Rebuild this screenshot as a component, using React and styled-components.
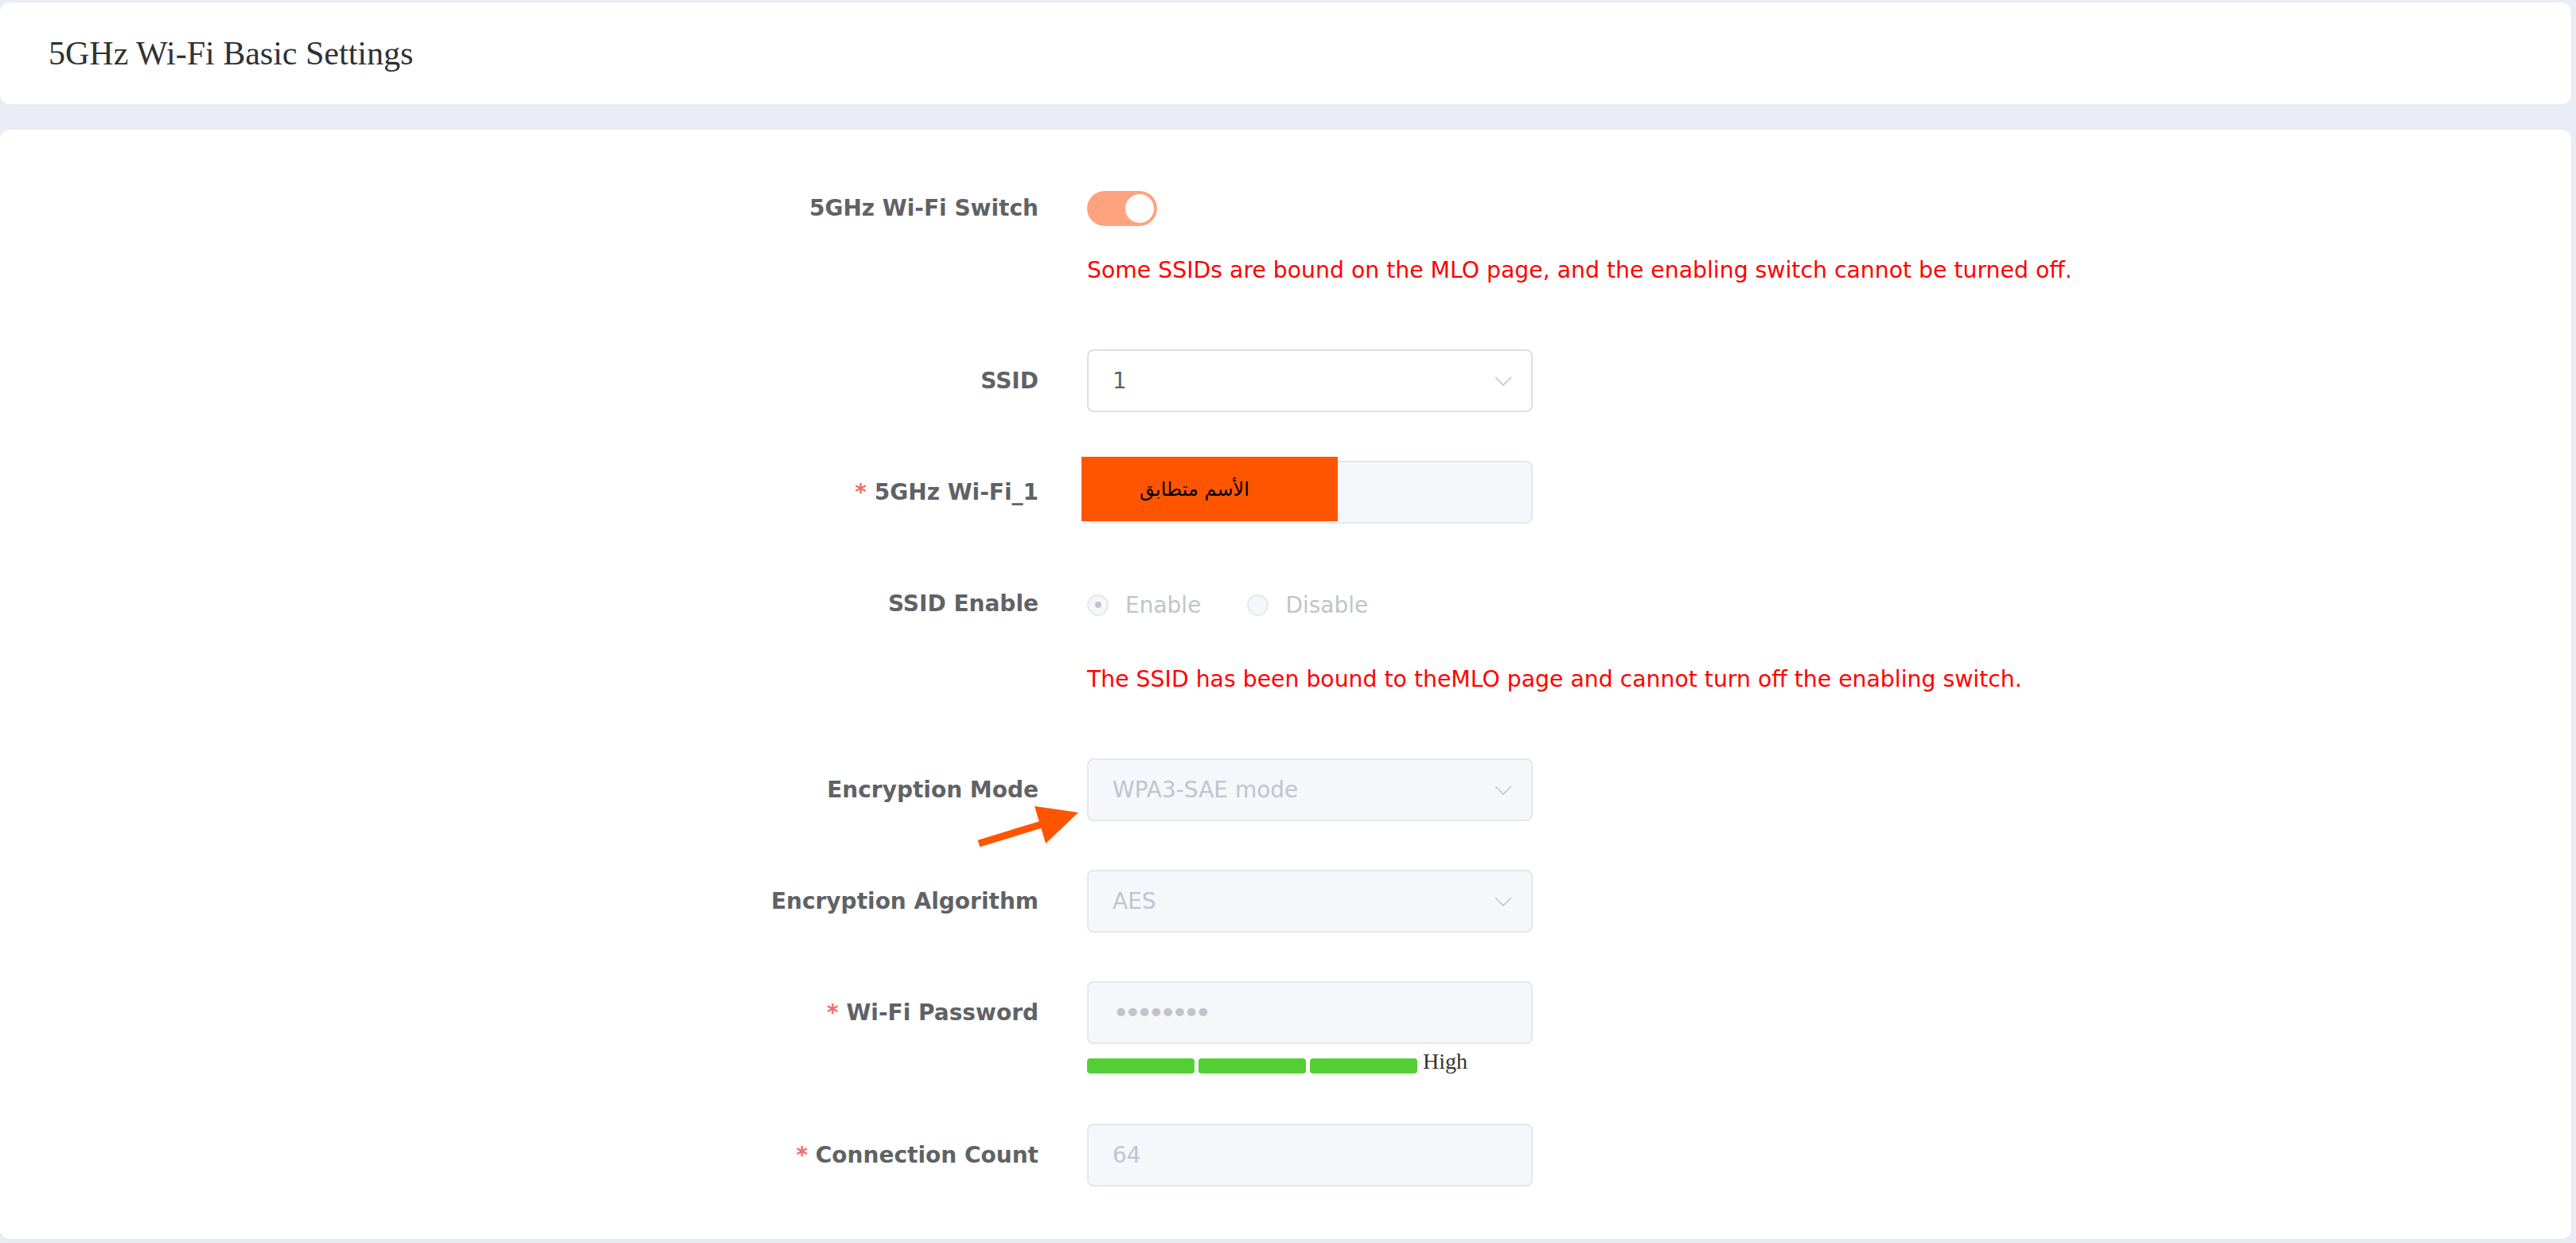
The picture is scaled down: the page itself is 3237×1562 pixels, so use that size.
import styled, { createGlobalStyle } from "styled-components";

const GlobalStyle = createGlobalStyle`
  html, body {
    margin: 0;
    padding: 0;
    background: #e9ecf4;
  }
  * {
    box-sizing: border-box;
  }
`;

function Chevron() {
  return (
    <ChevronIcon viewBox="0 0 22 12" width="22" height="12">
      <polyline points="1,1 11,11 21,1" fill="none" stroke="#c0c4cc" strokeWidth="1.6" />
    </ChevronIcon>
  );
}

function Arrow() {
  return (
    <ArrowMark viewBox="0 0 130 56" width="130" height="56">
      <polygon
        points="0.7,44.7 77.7,21.2 72,2 127,10 86,49 80.3,29.8 3.3,53.3"
        fill="#ff5500"
      />
    </ArrowMark>
  );
}

function Select({ value, disabled }) {
  return (
    <Field disabled={disabled}>
      <FieldText disabled={disabled}>{value}</FieldText>
      <Chevron />
    </Field>
  );
}

function App() {
  return (
    <>
      <GlobalStyle />
      <Page>
        <HeaderCard>
          <Title>5GHz Wi-Fi Basic Settings</Title>
        </HeaderCard>

        <FormCard>
          <FormItem>
            <Label>5GHz Wi-Fi Switch</Label>
            <Content>
              <ControlLine>
                <Switch>
                  <Knob />
                </Switch>
              </ControlLine>
              <Message top={19} bottom={18}>
                Some SSIDs are bound on the MLO page, and the enabling switch cannot be turned off.
              </Message>
            </Content>
          </FormItem>

          <FormItem>
            <Label>SSID</Label>
            <Content>
              <Select value="1" />
            </Content>
          </FormItem>

          <FormItem>
            <Label>
              <Required>*</Required> 5GHz Wi-Fi_1
            </Label>
            <Content>
              <Field disabled>
                <NameBadge>الأسم متطابق</NameBadge>
              </Field>
            </Content>
          </FormItem>

          <FormItem>
            <Label>SSID Enable</Label>
            <Content>
              <ControlLine shift={3}>
                <RadioOption>
                  <RadioCircle checked />
                  Enable
                </RadioOption>
                <RadioOption>
                  <RadioCircle />
                  Disable
                </RadioOption>
              </ControlLine>
              <Message top={36} bottom={18}>
                The SSID has been bound to theMLO page and cannot turn off the enabling switch.
              </Message>
            </Content>
          </FormItem>

          <FormItem>
            <Label>Encryption Mode</Label>
            <Content>
              <Select value="WPA3-SAE mode" disabled />
              <Arrow />
            </Content>
          </FormItem>

          <FormItem>
            <Label>Encryption Algorithm</Label>
            <Content>
              <Select value="AES" disabled />
            </Content>
          </FormItem>

          <FormItem>
            <Label>
              <Required>*</Required> Wi-Fi Password
            </Label>
            <Content>
              <Field disabled>
                <Dots>••••••••</Dots>
              </Field>
              <StrengthRow>
                <StrengthBar />
                <StrengthBar />
                <StrengthBar />
                <StrengthText>High</StrengthText>
              </StrengthRow>
            </Content>
          </FormItem>

          <FormItem>
            <Label>
              <Required>*</Required> Connection Count
            </Label>
            <Content>
              <Field disabled>
                <FieldText disabled>64</FieldText>
              </Field>
            </Content>
          </FormItem>
        </FormCard>
      </Page>
    </>
  );
}

const Page = styled.div`
  display: flex;
  flex-direction: column;
  gap: 32px;
  min-height: 1562px;
  padding: 3px 6px 5px 0;
`;

const HeaderCard = styled.header`
  display: flex;
  align-items: center;
  height: 128px;
  padding-left: 61px;
  background: #ffffff;
  border-radius: 12px;
  box-shadow: 0 1px 3px rgba(0, 0, 0, 0.03);
`;

const Title = styled.h1`
  margin: 0;
  font-family: "Liberation Serif", "Times New Roman", serif;
  font-size: 42px;
  font-weight: 400;
  color: #303133;
`;

const FormCard = styled.section`
  flex: 1;
  padding: 59px 0 0 0;
  background: #ffffff;
  border-radius: 12px;
  box-shadow: 0 1px 3px rgba(0, 0, 0, 0.03);
`;

const FormItem = styled.div`
  display: flex;
  align-items: flex-start;
  margin-bottom: 61px;
  font-family: "DejaVu Sans", Verdana, sans-serif;
`;

const Label = styled.label`
  flex-shrink: 0;
  width: 1305px;
  text-align: right;
  line-height: 79px;
  font-size: 28px;
  font-weight: 700;
  color: #606266;
  white-space: nowrap;
`;

const Required = styled.span`
  color: #f56c6c;
`;

const Content = styled.div`
  position: relative;
  flex: 1;
  margin-left: 61px;
`;

const ControlLine = styled.div`
  display: flex;
  align-items: center;
  height: 79px;
  padding-top: ${(p) => p.shift || 0}px;
`;

const Switch = styled.span`
  display: inline-flex;
  align-items: center;
  justify-content: flex-end;
  width: 88px;
  height: 44px;
  padding: 0 4px;
  border-radius: 22px;
  background: #ffa27d;
`;

const Knob = styled.span`
  width: 36px;
  height: 36px;
  border-radius: 50%;
  background: #ffffff;
`;

const Message = styled.div`
  padding-top: ${(p) => p.top}px;
  padding-bottom: ${(p) => p.bottom}px;
  line-height: 40px;
  font-size: 28.3px;
  color: #ff0000;
  white-space: nowrap;
`;

const Field = styled.div`
  position: relative;
  display: flex;
  align-items: center;
  justify-content: space-between;
  width: 560px;
  height: 79px;
  padding: 0 24px 0 30px;
  border: 2px solid ${(p) => (p.disabled ? "#e4e7ed" : "#dcdfe6")};
  border-radius: 8px;
  background: ${(p) => (p.disabled ? "#f5f7fa" : "#ffffff")};
`;

const FieldText = styled.span`
  font-size: 28px;
  color: ${(p) => (p.disabled ? "#c0c4cc" : "#606266")};
`;

const ChevronIcon = styled.svg`
  display: block;
  flex-shrink: 0;
`;

const Dots = styled.span`
  font-size: 36px;
  letter-spacing: -6.5px;
  color: #c0c4cc;
`;

/* annotation pasted over the name input */
const NameBadge = styled.div`
  position: absolute;
  left: -9px;
  top: -7px;
  width: 322px;
  height: 81px;
  display: flex;
  align-items: center;
  justify-content: flex-end;
  padding-left: 73px;
  background: #ff5500;
  font-family: "DejaVu Sans", sans-serif;
  font-size: 24px;
  color: #000000;
  direction: rtl;
`;

const ArrowMark = styled.svg`
  position: absolute;
  left: -138px;
  top: 58px;
`;

const RadioOption = styled.span`
  display: inline-flex;
  align-items: center;
  gap: 21px;
  margin-right: 58px;
  font-size: 28px;
  color: #c0c4cc;
`;

const RadioCircle = styled.span`
  position: relative;
  display: inline-block;
  width: 27px;
  height: 27px;
  border: 2px solid #e4e7ed;
  border-radius: 50%;
  background: #f5f7fa;

  &::after {
    content: "";
    display: ${(p) => (p.checked ? "block" : "none")};
    position: absolute;
    left: 50%;
    top: 50%;
    width: 8px;
    height: 8px;
    margin: -4px 0 0 -4px;
    border-radius: 50%;
    background: #c0c4cc;
  }
`;

const StrengthRow = styled.div`
  display: flex;
  align-items: flex-start;
  gap: 5px;
  height: 21px;
  margin-top: 18px;
`;

const StrengthBar = styled.span`
  width: 135px;
  height: 19px;
  border-radius: 4px;
  background: #52cf33;
`;

const StrengthText = styled.span`
  margin: -10px 0 0 2px;
  font-family: "Liberation Serif", "Times New Roman", serif;
  font-size: 28px;
  line-height: 1;
  color: #333333;
`;

export default App;
